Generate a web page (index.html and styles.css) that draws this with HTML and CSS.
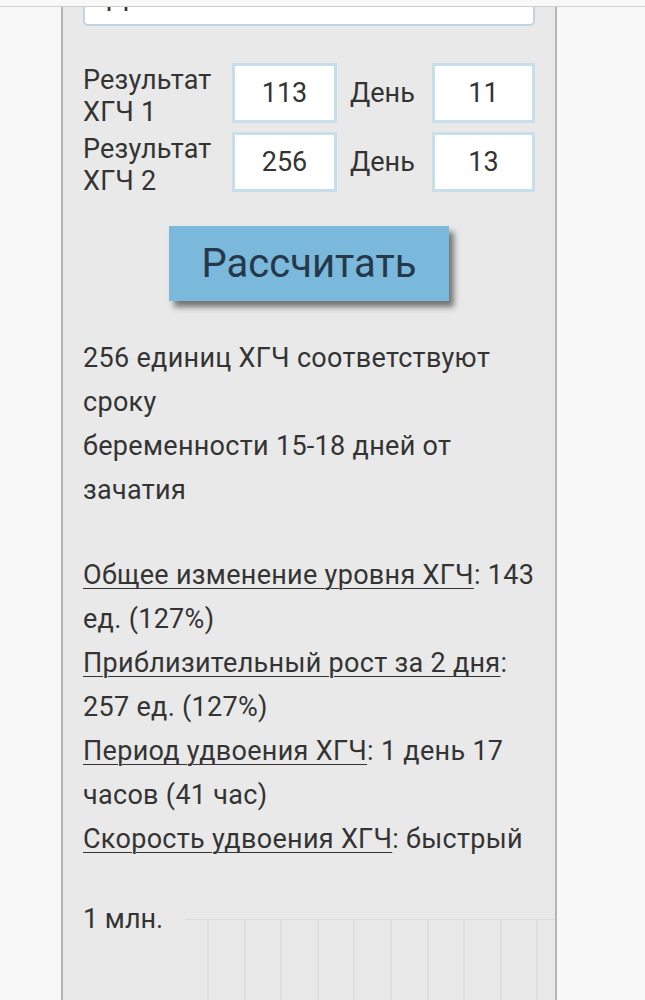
FILE: index.html
```html
<!DOCTYPE html>
<html lang="ru">
<head>
  <meta charset="UTF-8" />
  <meta name="viewport" content="width=device-width, initial-scale=1.0"/>
  <title>Калькулятор ХГЧ</title>
  <link rel="stylesheet" href="styles.css">
</head>
<body>

  <div class="topbar"></div>

  <div class="panel">
    <div class="select-box">
      <span>Дни после зачатия</span>
      <span class="select-arrow"></span>
    </div>

    <form id="hcgForm">
      <div class="row">
        <label class="row-label" for="hcg1">Результат ХГЧ 1</label>
        <input class="num" id="hcg1" type="text" value="113">
        <span class="day-label">День</span>
        <input class="num num-day" type="text" value="11">
      </div>
      <div class="row">
        <label class="row-label" for="hcg2">Результат ХГЧ 2</label>
        <input class="num" id="hcg2" type="text" value="256">
        <span class="day-label">День</span>
        <input class="num num-day" type="text" value="13">
      </div>

      <div class="btn-wrap">
        <button class="calc-btn" type="submit">Рассчитать</button>
      </div>
    </form>

    <div class="result">
      <p>256 единиц ХГЧ соответствуют сроку<br>беременности 15-18 дней от зачатия</p>

      <p class="stats">
        <a href="#">Общее изменение уровня ХГЧ</a>: 143 ед. (127%)<br>
        <a href="#">Приблизительный рост за 2 дня</a>: 257 ед. (127%)<br>
        <a href="#">Период удвоения ХГЧ</a>: 1 день 17 часов (41 час)<br>
        <a href="#">Скорость удвоения ХГЧ</a>: быстрый
      </p>
    </div>

    <div class="chart">
      <span class="axis-label">1 млн.</span>
      <div class="grid"></div>
    </div>
  </div>

</body>
</html>
```

FILE: styles.css
```css
body {
  font-family: Roboto, "Noto Sans", sans-serif;
  background-color: #f8f8f8;
  color: #343434;
  margin: 0;
  padding: 0;
}

.topbar {
  position: fixed;
  top: 0;
  left: 0;
  right: 0;
  height: 6px;
  background: #f8f8f8;
  border-bottom: 1px solid #cfcfcf;
  z-index: 5;
}

.panel {
  width: 452px;
  margin-left: 61px;
  margin-top: -34px;
  padding: 0 20px;
  background: #e9e9e9;
  border-left: 2px solid #b5b5b5;
  border-right: 2px solid #b5b5b5;
  min-height: 1100px;
}

.select-box {
  height: 56px;
  background: white;
  border: 2px solid #bfd5e1;
  border-radius: 5px;
  display: flex;
  align-items: center;
  justify-content: space-between;
  padding: 0 14px 0 22px;
  font-size: 28px;
  overflow: hidden;
  margin-bottom: 37px;
}

.select-arrow {
  width: 28px;
  height: 28px;
  border-radius: 50%;
  background: #7ab8dc;
  margin-top: -38px;
}

.row {
  display: flex;
  align-items: center;
  height: 60px;
  margin-bottom: 9px;
}

.row-label {
  width: 149px;
  font-size: 27px;
  line-height: 32px;
  margin-top: 6px;
  letter-spacing: 0.2px;
}

.num {
  box-sizing: border-box;
  width: 105px;
  height: 60px;
  border: 3px solid #c7dfeb;
  background: white;
  font-family: Roboto, sans-serif;
  font-size: 27px;
  color: #343434;
  text-align: center;
  padding: 0;
  outline: none;
}

.num-day {
  width: 103px;
}

.day-label {
  width: 82px;
  padding-left: 13px;
  font-size: 27px;
}

.btn-wrap {
  display: flex;
  justify-content: center;
  margin-top: 34px;
}

.calc-btn {
  width: 280px;
  height: 75px;
  background: #7ab8dc;
  color: #26394a;
  border: none;
  font-family: Roboto, sans-serif;
  font-size: 40px;
  box-shadow: 5px 6px 6px rgba(0,0,0,0.5);
  cursor: pointer;
}

.result {
  font-size: 27px;
  line-height: 44px;
  letter-spacing: 0.3px;
  margin-top: 35px;
}

.result p {
  margin: 0;
}

.result .stats {
  margin-top: 41px;
}

.result a {
  color: #343434;
  text-decoration: underline;
  text-underline-offset: 4px;
  text-decoration-thickness: 1px;
}

.chart {
  display: flex;
  align-items: flex-start;
  margin-top: 36px;
  margin-right: -20px;
}

.axis-label {
  font-size: 27px;
  line-height: 44px;
  width: 102px;
}

.grid {
  flex: 1;
  height: 120px;
  margin-top: 22px;
  border-top: 1px solid #dedede;
  background-image: repeating-linear-gradient(to right, transparent 0, transparent 22px, #e0e0e0 22px, #e0e0e0 24px, transparent 24px, transparent 36.6px);
}
```
